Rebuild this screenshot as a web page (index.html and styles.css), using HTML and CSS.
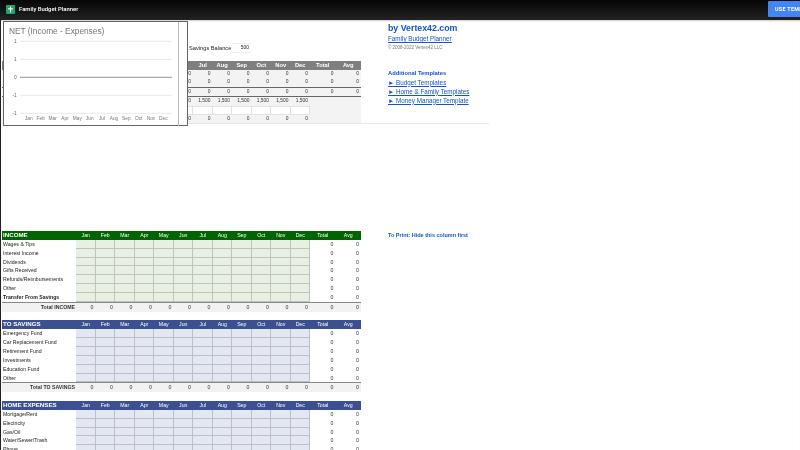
FILE: index.html
```html
<!DOCTYPE html>
<html lang="en">
<head>
  <meta charset="UTF-8">
  <meta name="viewport" content="width=device-width, initial-scale=1.0">
  <title>Family Budget Planner</title>
  <link rel="stylesheet" href="styles.css">
</head>
<body>

<header class="topbar">
  <svg class="sheets-icon" viewBox="0 0 9 9" width="9" height="9">
    <rect width="9" height="9" rx="1" fill="#1fa463"/>
    <path d="M4.500 1.500v6M2.200 3.800h4.600" fill="none" stroke="#fff" stroke-width="1.200"/>
  </svg>
  <span class="doc-title">Family Budget Planner</span>
  <span class="use-template">USE TEMPLATE</span>
</header>

<div class="sheet">
  <div class="band band-top">
    <div class="main">
      <div class="savings-line">
        <span>Savings Balance</span>
        <span class="savings-value">500</span>
      </div>
      <div class="row head-gray">
        <span class="label"></span><span></span><span></span><span></span><span></span><span></span><span>Jun</span><span>Jul</span><span>Aug</span><span>Sep</span><span>Oct</span><span>Nov</span><span>Dec</span><span>Total</span><span>Avg</span>
      </div>
      <div class="row summary"><span class="label"></span><span></span><span></span><span></span><span></span><span></span><span>0</span><span>0</span><span>0</span><span>0</span><span>0</span><span>0</span><span>0</span><span>0</span><span>0</span></div>
      <div class="row summary"><span class="label"></span><span></span><span></span><span></span><span></span><span></span><span>0</span><span>0</span><span>0</span><span>0</span><span>0</span><span>0</span><span>0</span><span>0</span><span>0</span></div>
      <div class="row summary net"><span class="label"></span><span></span><span></span><span></span><span></span><span></span><span>0</span><span>0</span><span>0</span><span>0</span><span>0</span><span>0</span><span>0</span><span>0</span><span>0</span></div>
      <div class="row summary"><span class="label"></span><span></span><span></span><span></span><span></span><span></span><span>1,500</span><span>1,500</span><span>1,500</span><span>1,500</span><span>1,500</span><span>1,500</span><span>1,500</span><span></span><span></span></div>
      <div class="row summary blanks"><span class="label"></span><span></span><span></span><span></span><span></span><span></span><span class="box"></span><span class="box"></span><span class="box"></span><span class="box"></span><span class="box"></span><span class="box"></span><span class="box"></span><span></span><span></span></div>
      <div class="row summary"><span class="label"></span><span></span><span></span><span></span><span></span><span></span><span>0</span><span>0</span><span>0</span><span>0</span><span>0</span><span>0</span><span>0</span><span></span><span></span></div>
    </div>
    <div class="side">
      <a class="brand" href="#">by Vertex42.com</a>
      <a class="side-link" href="#">Family Budget Planner</a>
      <p class="copyright">© 2008-2022 Vertex42 LLC</p>
      <p class="side-title">Additional Templates</p>
      <a class="side-link" href="#">► Budget Templates</a>
      <a class="side-link" href="#">► Home &amp; Family Templates</a>
      <a class="side-link" href="#">► Money Manager Template</a>
    </div>
  </div>

  <div class="band band-lower">
    <div class="main">
      <section class="income">
        <div class="row head"><span class="label">INCOME</span><span>Jan</span><span>Feb</span><span>Mar</span><span>Apr</span><span>May</span><span>Jun</span><span>Jul</span><span>Aug</span><span>Sep</span><span>Oct</span><span>Nov</span><span>Dec</span><span>Total</span><span>Avg</span></div>
        <div class="row item"><span class="label">Wages &amp; Tips</span><span></span><span></span><span></span><span></span><span></span><span></span><span></span><span></span><span></span><span></span><span></span><span></span><span>0</span><span>0</span></div>
        <div class="row item"><span class="label">Interest Income</span><span></span><span></span><span></span><span></span><span></span><span></span><span></span><span></span><span></span><span></span><span></span><span></span><span>0</span><span>0</span></div>
        <div class="row item"><span class="label">Dividends</span><span></span><span></span><span></span><span></span><span></span><span></span><span></span><span></span><span></span><span></span><span></span><span></span><span>0</span><span>0</span></div>
        <div class="row item"><span class="label">Gifts Received</span><span></span><span></span><span></span><span></span><span></span><span></span><span></span><span></span><span></span><span></span><span></span><span></span><span>0</span><span>0</span></div>
        <div class="row item"><span class="label">Refunds/Reimbursements</span><span></span><span></span><span></span><span></span><span></span><span></span><span></span><span></span><span></span><span></span><span></span><span></span><span>0</span><span>0</span></div>
        <div class="row item"><span class="label">Other</span><span></span><span></span><span></span><span></span><span></span><span></span><span></span><span></span><span></span><span></span><span></span><span></span><span>0</span><span>0</span></div>
        <div class="row item"><span class="label bold">Transfer From Savings</span><span></span><span></span><span></span><span></span><span></span><span></span><span></span><span></span><span></span><span></span><span></span><span></span><span>0</span><span>0</span></div>
        <div class="row total"><span class="label">Total INCOME</span><span>0</span><span>0</span><span>0</span><span>0</span><span>0</span><span>0</span><span>0</span><span>0</span><span>0</span><span>0</span><span>0</span><span>0</span><span>0</span><span>0</span></div>
      </section>

      <section class="savings">
        <div class="row head"><span class="label">TO SAVINGS</span><span>Jan</span><span>Feb</span><span>Mar</span><span>Apr</span><span>May</span><span>Jun</span><span>Jul</span><span>Aug</span><span>Sep</span><span>Oct</span><span>Nov</span><span>Dec</span><span>Total</span><span>Avg</span></div>
        <div class="row item"><span class="label">Emergency Fund</span><span></span><span></span><span></span><span></span><span></span><span></span><span></span><span></span><span></span><span></span><span></span><span></span><span>0</span><span>0</span></div>
        <div class="row item"><span class="label">Car Replacement Fund</span><span></span><span></span><span></span><span></span><span></span><span></span><span></span><span></span><span></span><span></span><span></span><span></span><span>0</span><span>0</span></div>
        <div class="row item"><span class="label">Retirement Fund</span><span></span><span></span><span></span><span></span><span></span><span></span><span></span><span></span><span></span><span></span><span></span><span></span><span>0</span><span>0</span></div>
        <div class="row item"><span class="label">Investments</span><span></span><span></span><span></span><span></span><span></span><span></span><span></span><span></span><span></span><span></span><span></span><span></span><span>0</span><span>0</span></div>
        <div class="row item"><span class="label">Education Fund</span><span></span><span></span><span></span><span></span><span></span><span></span><span></span><span></span><span></span><span></span><span></span><span></span><span>0</span><span>0</span></div>
        <div class="row item"><span class="label">Other</span><span></span><span></span><span></span><span></span><span></span><span></span><span></span><span></span><span></span><span></span><span></span><span></span><span>0</span><span>0</span></div>
        <div class="row total"><span class="label">Total TO SAVINGS</span><span>0</span><span>0</span><span>0</span><span>0</span><span>0</span><span>0</span><span>0</span><span>0</span><span>0</span><span>0</span><span>0</span><span>0</span><span>0</span><span>0</span></div>
      </section>

      <section class="savings">
        <div class="row head"><span class="label">HOME EXPENSES</span><span>Jan</span><span>Feb</span><span>Mar</span><span>Apr</span><span>May</span><span>Jun</span><span>Jul</span><span>Aug</span><span>Sep</span><span>Oct</span><span>Nov</span><span>Dec</span><span>Total</span><span>Avg</span></div>
        <div class="row item"><span class="label">Mortgage/Rent</span><span></span><span></span><span></span><span></span><span></span><span></span><span></span><span></span><span></span><span></span><span></span><span></span><span>0</span><span>0</span></div>
        <div class="row item"><span class="label">Electricity</span><span></span><span></span><span></span><span></span><span></span><span></span><span></span><span></span><span></span><span></span><span></span><span></span><span>0</span><span>0</span></div>
        <div class="row item"><span class="label">Gas/Oil</span><span></span><span></span><span></span><span></span><span></span><span></span><span></span><span></span><span></span><span></span><span></span><span></span><span>0</span><span>0</span></div>
        <div class="row item"><span class="label">Water/Sewer/Trash</span><span></span><span></span><span></span><span></span><span></span><span></span><span></span><span></span><span></span><span></span><span></span><span></span><span>0</span><span>0</span></div>
        <div class="row item"><span class="label">Phone</span><span></span><span></span><span></span><span></span><span></span><span></span><span></span><span></span><span></span><span></span><span></span><span></span><span>0</span><span>0</span></div>
      </section>
    </div>
    <div class="side">
      <p class="print-note">To Print: Hide this column first</p>
    </div>
  </div>

  <div class="chart-popup">
    <svg viewBox="0 0 174 104" width="174" height="104">
      <text class="chart-title" x="5" y="11.500">NET (Income - Expenses)</text>
      <path class="grid-line" d="M16 19.300h152M16 37.300h152M16 73.300h152M16 91.300h152"/>
      <path class="zero-line" d="M16 55.300h152"/>
      <g class="y-labels">
        <text x="12.700" y="21">1</text>
        <text x="12.700" y="39">1</text>
        <text x="12.700" y="57">0</text>
        <text x="12.700" y="75">-1</text>
        <text x="12.700" y="93">-1</text>
      </g>
      <g class="x-labels">
        <text x="24.700" y="97.800">Jan</text>
        <text x="36.700" y="97.800">Feb</text>
        <text x="48.700" y="97.800">Mar</text>
        <text x="61" y="97.800">Apr</text>
        <text x="73.300" y="97.800">May</text>
        <text x="85.700" y="97.800">Jun</text>
        <text x="98" y="97.800">Jul</text>
        <text x="110" y="97.800">Aug</text>
        <text x="122.300" y="97.800">Sep</text>
        <text x="134.700" y="97.800">Oct</text>
        <text x="147" y="97.800">Nov</text>
        <text x="159.300" y="97.800">Dec</text>
      </g>
    </svg>
  </div>
</div>

</body>
</html>
```

FILE: styles.css
```css
html, body {
  margin: 0;
  padding: 0;
  height: 450px;
  overflow: hidden;
  background-color: #fff;
}
body {
  font-family: "Liberation Sans", Arial, sans-serif;
  filter: blur(0.35px);
}
p {
  margin: 0;
}
.topbar {
  display: flex;
  align-items: center;
  height: 20px;
  background: linear-gradient(#060606, #222);
  color: #fff;
  overflow: hidden;
}
.sheets-icon {
  margin-left: 6px;
  margin-top: -2px;
}
.doc-title {
  margin-left: 4px;
  margin-top: -2px;
  font-family: Roboto, sans-serif;
  font-size: 5.900px;
  font-weight: 500;
}
.use-template {
  box-sizing: border-box;
  width: 32px;
  height: 16px;
  line-height: 16px;
  margin-left: auto;
  margin-top: -2px;
  padding-left: 7px;
  border-radius: 1px 0 0 1px;
  background-color: #4285f4;
  font-family: Roboto, sans-serif;
  font-size: 5.400px;
  font-weight: 700;
  letter-spacing: 0.3px;
  white-space: nowrap;
  overflow: hidden;
}
.sheet {
  position: relative;
  height: 430px;
  border-left: 1px solid #222;
  padding-left: 1px;
  box-shadow: inset 0 2px 2px -1px #ccc;
}
.band {
  display: flex;
  gap: 27px;
}
.band-top {
  box-sizing: border-box;
  width: 487px;
  height: 103.500px;
  padding-top: 23px;
  border-bottom: 1px solid #e4e7f0;
}
.band-lower {
  margin-top: 107.500px;
}
.main {
  flex: none;
  width: 359px;
}
.side {
  display: flex;
  flex-direction: column;
  align-items: flex-start;
  color: #1155cc;
  font-size: 6.300px;
}
.band-top .side {
  margin-top: -20px;
}
.brand {
  color: #1155cc;
  font-size: 8.800px;
  font-weight: 700;
  line-height: 11px;
  text-decoration: none;
}
.side-link {
  height: 9px;
  line-height: 9px;
  color: #1155cc;
}
.copyright {
  height: 9px;
  line-height: 9px;
  color: #777;
  font-size: 4.500px;
}
.side-title {
  margin-top: 16.500px;
  height: 9px;
  line-height: 9px;
  font-size: 5.800px;
  font-weight: 700;
}
.print-note {
  height: 9px;
  line-height: 9px;
  font-size: 5.500px;
  font-weight: 700;
  white-space: nowrap;
}
.savings-line {
  display: flex;
  align-items: center;
  height: 10px;
  margin-bottom: 8px;
  padding-left: 187px;
  font-size: 5.700px;
  color: #222;
}
.savings-value {
  box-sizing: border-box;
  width: 19px;
  height: 10px;
  margin-left: 1px;
  padding-right: 2.500px;
  border-top: 1px solid #eee;
  border-bottom: 1px solid #eee;
  font-size: 4.900px;
  line-height: 8px;
  text-align: right;
}
.row {
  display: grid;
  grid-template-columns: 74px repeat(12, 19.500px) 25.500px 25.500px;
  height: 8.850px;
  line-height: 8.850px;
  font-size: 5.200px;
  color: #333;
}
.row > span {
  box-sizing: border-box;
  min-width: 0;
  padding-right: 2px;
  text-align: right;
  white-space: nowrap;
}
.row > .label {
  padding-left: 1px;
  padding-right: 1px;
  text-align: left;
}
.head > span, .head-gray > span {
  padding: 0;
  text-align: center;
  color: #fff;
}
.head > .label {
  padding-left: 1px;
  text-align: left;
  font-size: 6.200px;
  font-weight: 700;
}
.head-gray {
  height: 8.500px;
  line-height: 8.500px;
  background-color: #7f7f7f;
  font-size: 5.800px;
  font-weight: 700;
}
.summary {
  background-color: #f3f3f3;
  height: 8.800px;
  line-height: 8.800px;
  font-size: 4.900px;
}
.summary.net {
  box-sizing: content-box;
  border-top: 1px solid #666;
  border-bottom: 1px solid #666;
  height: 8px;
  line-height: 8px;
}
.blanks .box {
  background-color: #fff;
  border: 1px solid #e2e2e2;
  border-width: 0.500px 1px 1px 0;
}
.income .head {
  background-color: #006400;
}
.savings .head {
  background-color: #3a5090;
}
.income .item > span:nth-child(n+2):nth-child(-n+13) {
  background-color: #e7f0e3;
  border-right: 1px solid #bfc4bc;
  border-bottom: 1px solid #bfc4bc;
}
.savings .item > span:nth-child(n+2):nth-child(-n+13) {
  background-color: #e3e7f2;
  border-right: 1px solid #bdbfc6;
  border-bottom: 1px solid #bdbfc6;
}
.item > .label {
  color: #222;
}
.bold {
  font-weight: 700;
}
.total {
  box-sizing: border-box;
  height: 10px;
  border-top: 1px solid #888;
  background-color: #f2f2f2;
  margin-bottom: 8.700px;
}
.total > .label {
  padding-right: 1px;
  text-align: right;
  font-weight: 700;
}
.chart-popup {
  position: absolute;
  top: 1px;
  left: 2px;
  width: 185px;
  height: 105px;
  box-sizing: border-box;
  border: 1px solid #666;
  background-color: #fff;
}
.chart-popup svg {
  display: block;
  border-right: 1px solid #bbb;
}
.chart-title {
  font-size: 8.300px;
  fill: #757575;
}
.grid-line {
  stroke: #e0e0e0;
  stroke-width: 0.700;
}
.zero-line {
  stroke: #777;
  stroke-width: 0.800;
}
.y-labels text {
  font-size: 4.800px;
  fill: #666;
  text-anchor: end;
}
.x-labels text {
  font-size: 4.800px;
  fill: #777;
  text-anchor: middle;
}
```
